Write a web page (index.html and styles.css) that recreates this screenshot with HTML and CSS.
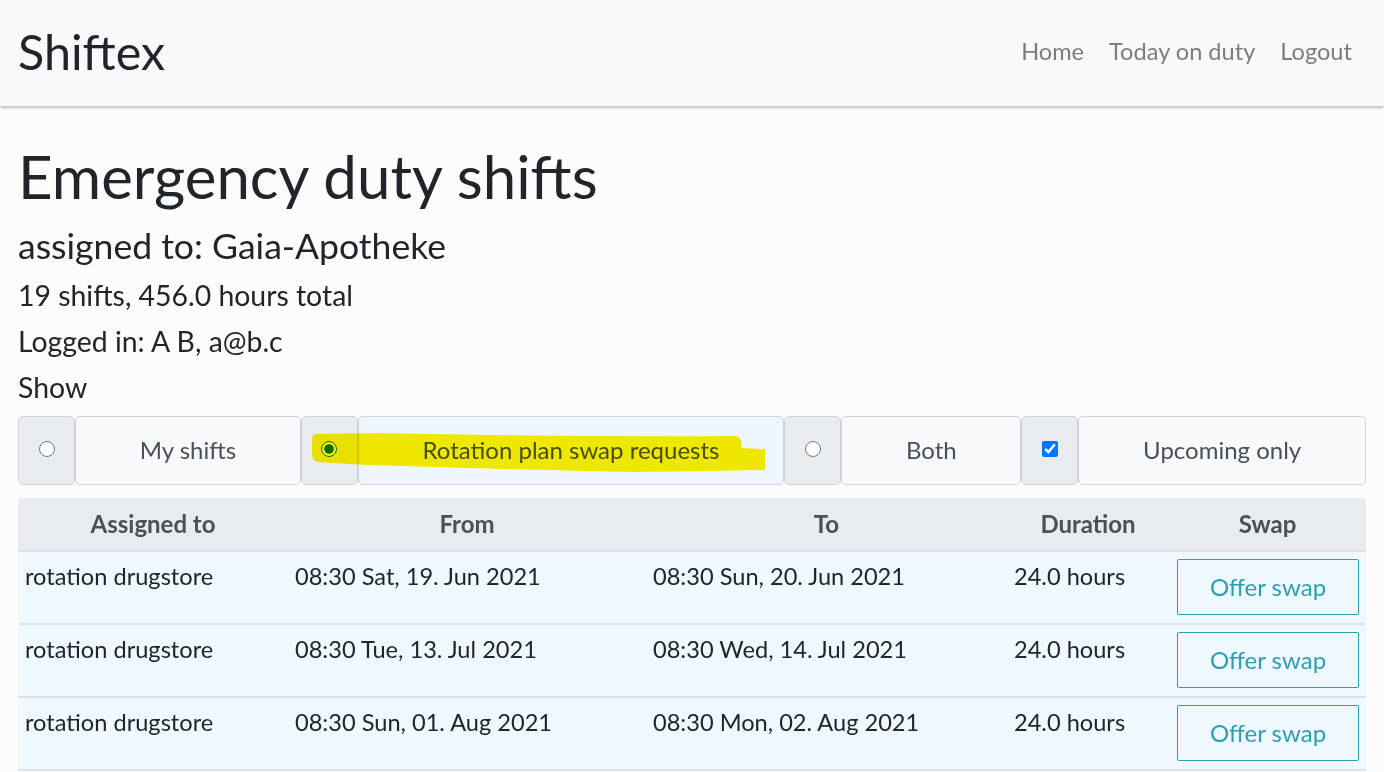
FILE: index.html
```html
<!DOCTYPE html>
<html lang="en">
<head>
<meta charset="utf-8">
<title>Shiftex</title>
<link rel="stylesheet" href="styles.css">
</head>
<body>
<nav class="navbar">
  <a class="brand" href="#">Shiftex</a>
  <ul class="nav">
    <li><a href="#">Home</a></li>
    <li><a href="#">Today on duty</a></li>
    <li><a href="#">Logout</a></li>
  </ul>
</nav>
<main class="container">
  <h1 class="title">Emergency duty shifts</h1>
  <h3 class="assigned">assigned to: Gaia-Apotheke</h3>
  <p class="info">19 shifts, 456.0 hours total</p>
  <p class="info">Logged in: A B, a@b.c</p>
  <p class="info">Show</p>
  <div class="filters">
    <div class="box"><input type="radio" name="show"></div>
    <label class="lbl">My shifts</label>
    <div class="box"><input type="radio" name="show" checked></div>
    <label class="lbl lbl-active">Rotation plan swap requests</label>
    <div class="box"><input type="radio" name="show"></div>
    <label class="lbl">Both</label>
    <div class="box"><input type="checkbox" checked></div>
    <label class="lbl">Upcoming only</label>
    <svg class="marker" width="462" height="48" viewBox="0 0 462 48" aria-hidden="true">
      <path d="M8,6 L70,5 Q250,9 428,8 Q433,9 433,14 L433,20 L457,21 L457,42 Q400,43 325,44 Q230,42 159,40 Q100,38 59,37 L10,34 Q4,33 4,26 L4,12 Q4,6 8,6 Z" fill="#fff200"/>
    </svg>
  </div>
  <table class="shifts">
    <thead>
      <tr>
        <th class="c1">Assigned to</th>
        <th class="c2">From</th>
        <th class="c3">To</th>
        <th class="c4">Duration</th>
        <th class="c5">Swap</th>
      </tr>
    </thead>
    <tbody>
      <tr>
        <td>rotation drugstore</td>
        <td>08:30 Sat, 19. Jun 2021</td>
        <td>08:30 Sun, 20. Jun 2021</td>
        <td>24.0 hours</td>
        <td><button class="btn">Offer swap</button></td>
      </tr>
      <tr>
        <td>rotation drugstore</td>
        <td>08:30 Tue, 13. Jul 2021</td>
        <td>08:30 Wed, 14. Jul 2021</td>
        <td>24.0 hours</td>
        <td><button class="btn">Offer swap</button></td>
      </tr>
      <tr>
        <td>rotation drugstore</td>
        <td>08:30 Sun, 01. Aug 2021</td>
        <td>08:30 Mon, 02. Aug 2021</td>
        <td>24.0 hours</td>
        <td><button class="btn">Offer swap</button></td>
      </tr>
    </tbody>
  </table>
</main>
</body>
</html>
```

FILE: styles.css
```css
* { box-sizing: border-box; }

html, body {
  margin: 0;
  padding: 0;
}

body {
  background: #fcfcfd;
  color: #212529;
  font-family: Lato, "Open Sans", "Liberation Sans", sans-serif;
  font-size: 24px;
  line-height: 1.5;
}

.navbar {
  height: 106px;
  background: #f8f9fa;
  display: flex;
  align-items: center;
  justify-content: space-between;
  padding: 0 20px 3px 18px;
  box-shadow: 0 2px 3px rgba(0, 0, 0, 0.25);
  position: relative;
}

.brand {
  font-size: 48.5px;
  color: #212529;
  text-decoration: none;
  line-height: 1.2;
}

.nav {
  list-style: none;
  margin: 0;
  padding: 0;
  display: flex;
}

.nav a {
  display: block;
  padding: 0 12.5px 0 12.5px;
  color: #7c7d7e;
  text-decoration: none;
  font-size: 23.6px;
}

.nav li:last-child a {
  padding-right: 12px;
}

.container {
  padding: 34px 18px 0 18px;
}

.title {
  font-size: 60px;
  font-weight: 400;
  line-height: 1.2;
  margin: 0 0 13px 0;
}

.assigned {
  font-size: 35.6px;
  font-weight: 400;
  line-height: 1.2;
  margin: 0 0 4px 0;
}

.info {
  font-size: 28.4px;
  line-height: 46px;
  margin: 0;
}

.filters {
  position: relative;
  display: flex;
  height: 69px;
  margin-top: 6px;
  margin-bottom: 13px;
}

.box {
  flex: 0 0 57px;
  display: flex;
  align-items: center;
  justify-content: center;
  background: #e9ecef;
  border: 1px solid #ced4da;
  border-radius: 5px;
}

.box input {
  width: 16px;
  height: 16px;
  margin: 0 0 3px 0;
}

.lbl {
  flex: 1 1 auto;
  display: flex;
  align-items: center;
  justify-content: center;
  background: #f8f9fa;
  border: 1px solid #ced4da;
  border-radius: 5px;
  color: #495057;
  font-size: 24px;
  padding: 0 12px;
  white-space: nowrap;
}

.lbl-active {
  background: #eef5fc;
}

.marker {
  position: absolute;
  left: 290px;
  top: 12px;
  mix-blend-mode: multiply;
  pointer-events: none;
}

.shifts {
  width: 100%;
  border-collapse: collapse;
}

.shifts th {
  background: #e9ecef;
  color: #495057;
  font-weight: 700;
  text-align: center;
  padding: 8px 7px 8px 7px;
  border-bottom: 2px solid #dee2e6;
  vertical-align: top;
}

.c1 { width: 270px; }
.c2 { width: 358px; }
.c3 { width: 361px; }
.c4 { width: 162px; }
.c5 { width: 197px; }

.shifts td {
  background: #f0f8ff;
  text-align: left;
  vertical-align: top;
  padding: 7px 7px 8px 7px;
  border-top: 2px solid #dee2e6;
  font-size: 23.6px;
}

.shifts tbody tr:last-child td {
  border-bottom: 2px solid #dee2e6;
}

.shifts td:last-child {
  padding-left: 8px;
}

.btn {
  display: block;
  width: 100%;
  height: 56px;
  background: transparent;
  border: 1px solid #2b9fb1;
  border-radius: 2px;
  color: #2b9fb1;
  font-family: Lato, "Open Sans", "Liberation Sans", sans-serif;
  font-size: 24px;
  line-height: 1.5;
  padding: 0;
}
```
